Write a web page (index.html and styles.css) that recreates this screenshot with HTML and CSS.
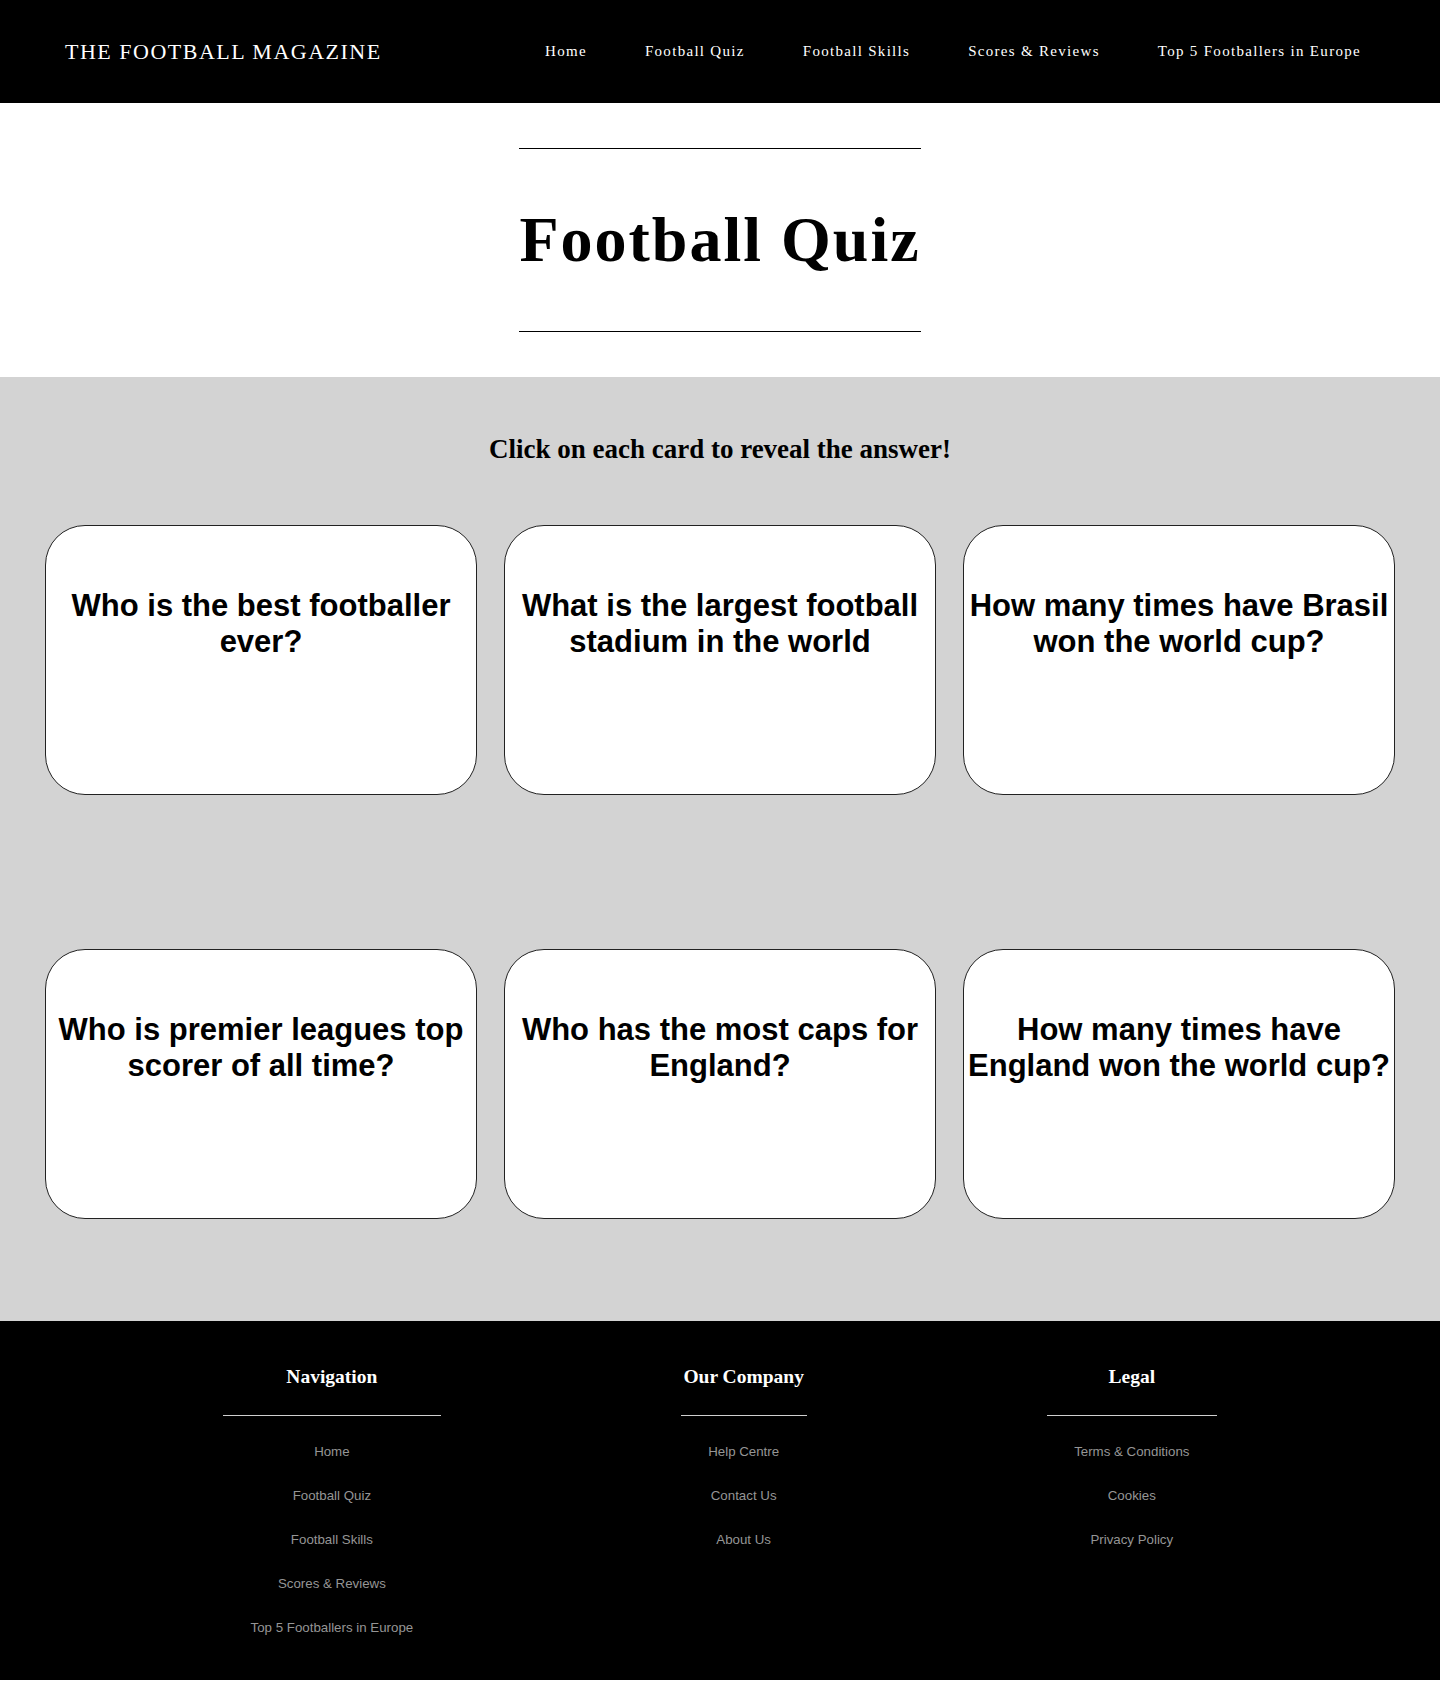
FILE: index.html
```html
<!DOCTYPE html>
<html lang="en">
<head>
<meta charset="utf-8">
<title>Football Quiz - The Football Magazine</title>
<link rel="stylesheet" href="styles.css">
</head>
<body>
<header class="site-header">
  <div class="logo">THE FOOTBALL MAGAZINE</div>
  <nav class="main-nav">
    <a href="#">Home</a>
    <a href="#">Football Quiz</a>
    <a href="#">Football Skills</a>
    <a href="#">Scores &amp; Reviews</a>
    <a href="#">Top 5 Footballers in Europe</a>
  </nav>
</header>

<section class="hero">
  <h1 class="hero-title">Football Quiz</h1>
</section>

<main class="quiz">
  <h2 class="quiz-intro">Click on each card to reveal the answer!</h2>
  <div class="card-grid">
    <div class="card"><p class="card-q">Who is the best footballer ever?</p></div>
    <div class="card"><p class="card-q">What is the largest football stadium in the world</p></div>
    <div class="card"><p class="card-q">How many times have Brasil won the world cup?</p></div>
    <div class="card"><p class="card-q">Who is premier leagues top scorer of all time?</p></div>
    <div class="card"><p class="card-q">Who has the most caps for England?</p></div>
    <div class="card"><p class="card-q">How many times have England won the world cup?</p></div>
  </div>
</main>

<footer class="site-footer">
  <div class="footer-col">
    <h3 class="footer-heading">Navigation</h3>
    <div class="footer-rule"></div>
    <ul class="footer-links">
      <li><a href="#">Home</a></li>
      <li><a href="#">Football Quiz</a></li>
      <li><a href="#">Football Skills</a></li>
      <li><a href="#">Scores &amp; Reviews</a></li>
      <li><a href="#">Top 5 Footballers in Europe</a></li>
    </ul>
  </div>
  <div class="footer-col">
    <h3 class="footer-heading">Our Company</h3>
    <div class="footer-rule"></div>
    <ul class="footer-links">
      <li><a href="#">Help Centre</a></li>
      <li><a href="#">Contact Us</a></li>
      <li><a href="#">About Us</a></li>
    </ul>
  </div>
  <div class="footer-col">
    <h3 class="footer-heading">Legal</h3>
    <div class="footer-rule"></div>
    <ul class="footer-links">
      <li><a href="#">Terms &amp; Conditions</a></li>
      <li><a href="#">Cookies</a></li>
      <li><a href="#">Privacy Policy</a></li>
    </ul>
  </div>
</footer>
</body>
</html>
```

FILE: styles.css
```css
* {
  box-sizing: border-box;
}

html, body {
  margin: 0;
  padding: 0;
}

body {
  font-family: "Liberation Serif", "Times New Roman", serif;
  color: #000;
  background: #fff;
}

a {
  text-decoration: none;
}

/* Header */
.site-header {
  height: 103px;
  background: #000;
  display: flex;
  align-items: center;
  justify-content: space-between;
  padding: 0 50px 0 65px;
}

.logo {
  color: #fff;
  font-size: 22px;
  letter-spacing: 1.5px;
}

.main-nav {
  display: flex;
}

.main-nav a {
  color: #fff;
  font-size: 15px;
  letter-spacing: 1.3px;
  padding: 0 29px;
}

/* Hero */
.hero {
  background: #fff;
  padding: 45px 0;
  text-align: center;
}

.hero-title {
  display: inline-block;
  margin: 0;
  padding: 54px 0;
  border-top: 1px solid #000;
  border-bottom: 1px solid #000;
  font-size: 64px;
  font-weight: bold;
  letter-spacing: 2px;
  line-height: normal;
}

/* Quiz */
.quiz {
  background: #d3d3d3;
  padding: 57px 45px 102px;
}

.quiz-intro {
  margin: 0 0 60px;
  text-align: center;
  font-size: 27px;
  font-weight: bold;
  line-height: normal;
}

.card-grid {
  display: grid;
  grid-template-columns: repeat(3, 1fr);
  column-gap: 27px;
  row-gap: 154px;
}

.card {
  height: 270px;
  background: #fff;
  border: 1px solid #222;
  border-radius: 40px;
  padding: 62px 2px 0;
}

.card-q {
  margin: 0;
  text-align: center;
  font-family: "Liberation Sans", Arial, Helvetica, sans-serif;
  font-weight: bold;
  font-size: 31px;
  line-height: normal;
}

/* Footer */
.site-footer {
  background: #000;
  display: flex;
  justify-content: center;
  align-items: flex-start;
  gap: 240px;
  padding: 45px 0 45px;
}

.footer-col {
  display: flex;
  flex-direction: column;
  align-items: center;
}

.footer-heading {
  margin: 0;
  color: #fff;
  font-size: 19.5px;
  font-weight: bold;
  line-height: normal;
}

.footer-rule {
  align-self: stretch;
  height: 1px;
  background: #cfcfcf;
  margin-top: 27px;
}

.footer-links {
  list-style: none;
  margin: 0;
  padding: 28px 27.5px 0;
  display: flex;
  flex-direction: column;
  align-items: center;
  gap: 28.7px;
  font-family: "Liberation Sans", Arial, Helvetica, sans-serif;
  font-size: 13.3px;
  line-height: 15.3px;
}

.footer-links li {
  display: block;
}

.footer-links a {
  color: #959595;
}
```
